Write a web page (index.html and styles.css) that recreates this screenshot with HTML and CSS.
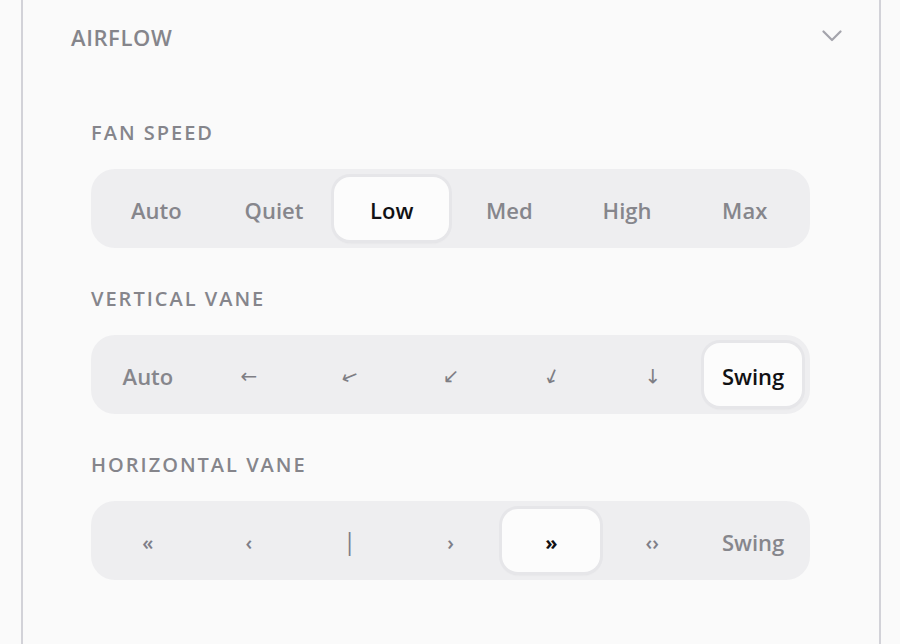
FILE: index.html
```html
<!DOCTYPE html>
<html lang="en">
<head>
<meta charset="utf-8">
<title>Airflow</title>
<link rel="stylesheet" href="styles.css">
</head>
<body>
<section class="card">
  <header class="card-header">
    <h2 class="card-title">AIRFLOW</h2>
    <svg class="chevron" width="20" height="12" viewBox="0 0 20 12" aria-hidden="true">
      <polyline points="1.5,1.5 10,10 18.5,1.5" fill="none" stroke="currentColor" stroke-width="2.2" stroke-linecap="round" stroke-linejoin="round"/>
    </svg>
  </header>
  <div class="card-body">
    <div class="group">
      <div class="group-label">FAN SPEED</div>
      <div class="segmented">
        <button class="seg">Auto</button>
        <button class="seg">Quiet</button>
        <button class="seg active">Low</button>
        <button class="seg">Med</button>
        <button class="seg">High</button>
        <button class="seg">Max</button>
      </div>
    </div>
    <div class="group">
      <div class="group-label">VERTICAL VANE</div>
      <div class="segmented">
        <button class="seg">Auto</button>
        <button class="seg"><span class="arrow">←</span></button>
        <button class="seg"><span class="arrow rot1">←</span></button>
        <button class="seg"><span class="arrow rot2">←</span></button>
        <button class="seg"><span class="arrow rot3">←</span></button>
        <button class="seg"><span class="arrow rot4">←</span></button>
        <button class="seg active">Swing</button>
      </div>
    </div>
    <div class="group">
      <div class="group-label">HORIZONTAL VANE</div>
      <div class="segmented">
        <button class="seg glyph">«</button>
        <button class="seg glyph">‹</button>
        <button class="seg glyph bar">|</button>
        <button class="seg glyph">›</button>
        <button class="seg glyph active">»</button>
        <button class="seg glyph">‹›</button>
        <button class="seg">Swing</button>
      </div>
    </div>
  </div>
</section>
</body>
</html>
```
FILE: styles.css
```css
* { box-sizing: border-box; }

html, body {
  margin: 0;
  padding: 0;
  background: #fafafa;
  font-family: "Open Sans", "Noto Sans", "DejaVu Sans", sans-serif;
}

.card {
  margin-left: 21px;
  width: 860px;
  min-height: 644px;
  border-left: 2px solid #d2d2d8;
  border-right: 2px solid #d2d2d8;
  background: #fafafa;
}

.card-header {
  height: 74px;
  display: flex;
  align-items: center;
  justify-content: space-between;
  padding: 0 37px 0 48px;
}

.card-title {
  margin: 0;
  font-size: 22px;
  font-weight: 600;
  letter-spacing: 0.6px;
  color: #85858b;
}

.chevron {
  color: #a4a4ac;
  margin-top: -3px;
}

.card-body {
  padding: 45px 69px 40px 68px;
  display: flex;
  flex-direction: column;
  gap: 37px;
}

.group-label {
  height: 28px;
  line-height: 28px;
  font-size: 20px;
  font-weight: 600;
  letter-spacing: 2px;
  color: #85858b;
  margin-bottom: 22px;
}

.segmented {
  display: flex;
  gap: 3px;
  height: 79px;
  padding: 8px;
  background: #eeeef0;
  border-radius: 24px;
}

.seg {
  flex: 1;
  min-width: 0;
  border: 0;
  margin: 0;
  padding: 3px 0 0;
  background: transparent;
  border-radius: 16px;
  font-family: inherit;
  font-size: 22px;
  font-weight: 600;
  color: #86868c;
  display: flex;
  align-items: center;
  justify-content: center;
}

.seg.active {
  background: #fcfcfc;
  color: #111114;
  font-weight: 600;
  box-shadow: 0 0 0 3px #e6e6e9, 0 2px 3px rgba(0, 0, 0, 0.14);
}

.arrow {
  display: inline-block;
  font-family: "DejaVu Sans", sans-serif;
  font-size: 20px;
  font-weight: 400;
  line-height: 1;
  color: #7e7e84;
}

.rot1 { transform: rotate(-22.5deg); }
.rot2 { transform: rotate(-45deg); }
.rot3 { transform: rotate(-67.5deg); }
.rot4 { transform: rotate(-90deg); }

.glyph {
  font-size: 20px;
  font-weight: 600;
  color: #7e7e88;
}

.glyph.bar {
  font-size: 24px;
  font-weight: 400;
  padding-top: 0;
}

.glyph.active {
  color: #111114;
  font-weight: 700;
}
```
